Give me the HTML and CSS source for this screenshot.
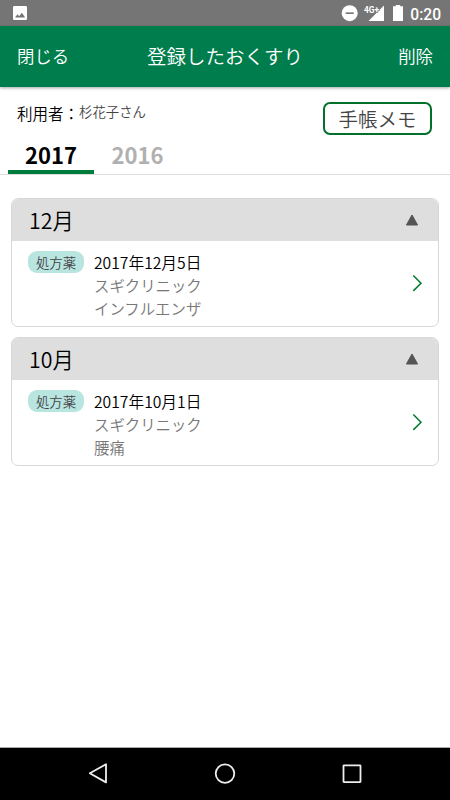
FILE: index.html
```html
<!DOCTYPE html>
<html lang="ja">
  <head>
    <meta charset="UTF-8" />
    <meta name="viewport" content="width=device-width, initial-scale=1.0" />
    <title>登録したおくすり</title>
    <link rel="stylesheet" href="styles.css">
  </head>
  <body>
    <!-- ステータスバー -->
    <div class="status-bar">
      <svg width="14" height="14" viewBox="0 0 14 14">
        <rect width="14" height="14" rx="1.3" fill="#fff" />
        <path d="M2 11.5L4.5 8.3L6.2 10.2L8.8 6.8L12.2 11.5Z" fill="#757575" />
      </svg>
      <div class="status-right">
        <svg width="70" height="20" viewBox="0 0 70 20">
          <circle cx="9.7" cy="9.2" r="8" fill="#fff" />
          <path d="M5.7 9.2H13.7" stroke="#757575" stroke-width="1.6" />
          <path d="M44 1.5V17H28.5Z" fill="#fff" />
          <text class="status-net" x="24" y="8.6" textLength="15" lengthAdjust="spacingAndGlyphs">4G+</text>
          <path d="M53 2.2H55.8V1H60.2V2.2H63V17H53Z" fill="#fff" />
        </svg>
        <span class="status-time">0:20</span>
      </div>
    </div>

    <!-- ヘッダー -->
    <header class="header">
      <span class="header-btn">閉じる</span>
      <h1>登録したおくすり</h1>
      <span class="header-btn right">削除</span>
    </header>

    <!-- 利用者と年の切り替え -->
    <div class="user">
      <p class="user-label">利用者：<span class="user-name">杉花子さん</span></p>
      <button class="memo">手帳メモ</button>
    </div>
    <nav class="tabs">
      <span class="tab active">2017</span>
      <span class="tab">2016</span>
    </nav>

    <!-- 月ごとの一覧 -->
    <main>
      <section class="card">
        <h2>12月
          <svg width="14" height="12" viewBox="0 0 14 12"><path d="M7 1L12.6 11H1.4Z" fill="#555" stroke="#555" stroke-linejoin="round" /></svg>
        </h2>
        <div class="item">
          <span class="badge">処方薬</span>
          <div class="detail">
            <p class="date">2017年12月5日</p>
            <p>スギクリニック</p>
            <p>インフルエンザ</p>
          </div>
          <svg class="arrow" width="11" height="18" viewBox="0 0 11 18"><path d="M1.3 1.5L9 9.2L1.3 16.9" /></svg>
        </div>
      </section>
      <section class="card">
        <h2>10月
          <svg width="14" height="12" viewBox="0 0 14 12"><path d="M7 1L12.6 11H1.4Z" fill="#555" stroke="#555" stroke-linejoin="round" /></svg>
        </h2>
        <div class="item">
          <span class="badge">処方薬</span>
          <div class="detail">
            <p class="date">2017年10月1日</p>
            <p>スギクリニック</p>
            <p>腰痛</p>
          </div>
          <svg class="arrow" width="11" height="18" viewBox="0 0 11 18"><path d="M1.3 1.5L9 9.2L1.3 16.9" /></svg>
        </div>
      </section>
    </main>

    <!-- ナビゲーションバー -->
    <footer class="nav-bar">
      <svg width="22" height="22" viewBox="0 0 22 22"><path d="M19 1.3V19.4L2.8 10.3Z" /></svg>
      <svg width="22" height="22" viewBox="0 0 22 22"><circle cx="11" cy="10.6" r="9.3" /></svg>
      <svg width="22" height="22" viewBox="0 0 22 22"><rect x="2.5" y="2.3" width="17" height="16.8" rx="0.5" /></svg>
    </footer>
  </body>
</html>
```
FILE: styles.css
```css
* {
  margin: 0;
  padding: 0;
  box-sizing: border-box;
}
body {
  height: 800px;
  display: flex;
  flex-direction: column;
  overflow: hidden;
  background: #fff;
  color: #000;
  font-family: "Noto Sans CJK JP", sans-serif;
  font-weight: 350;
}

/* ===== ステータスバー ===== */
.status-bar {
  height: 26px;
  flex: none;
  display: flex;
  align-items: center;
  justify-content: space-between;
  padding: 0 9px 0 13px;
  background: #757575;
  color: #fff;
}
.status-right {
  display: flex;
  align-items: center;
}
.status-right svg {
  margin-top: 1px;
}
.status-net {
  font: 700 9.5px Roboto, sans-serif;
  fill: #fff;
  stroke: #757575;
  stroke-width: 1.5px;
  paint-order: stroke;
}
.status-time {
  font: 500 15.6px/20px Roboto, sans-serif;
  margin-top: 3px;
}

/* ===== ヘッダー ===== */
.header {
  height: 61px;
  flex: none;
  display: grid;
  grid-template-columns: 1fr auto 1fr;
  align-items: center;
  padding: 0 17px 2px;
  background: #007d4c;
  color: #fff;
  box-shadow: 0 1px 3px rgba(0, 0, 0, 0.35);
}
.header h1 {
  font-size: 19.5px;
  font-weight: inherit;
  line-height: 28px;
}
.header-btn {
  font-size: 17.4px;
  line-height: 26px;
}
.right {
  text-align: right;
}

/* ===== 利用者 ===== */
.user {
  height: 50px;
  flex: none;
  display: flex;
  justify-content: space-between;
  align-items: flex-start;
  padding: 14px 18px 0 17px;
}
.user-label {
  display: flex;
  font-size: 15.5px;
  line-height: 24px;
}
.user-name {
  font-size: 13.4px;
  line-height: 20px;
  color: #444;
}
.memo {
  width: 109px;
  height: 33px;
  margin-top: 1px;
  background: #fff;
  border: 2px solid #00702a;
  border-radius: 7px;
  color: #444;
  font-family: inherit;
  font-size: 19.5px;
  font-weight: inherit;
  line-height: 29px;
}

/* ===== 年タブ ===== */
.tabs {
  height: 38px;
  flex: none;
  display: flex;
  padding-left: 8px;
  border-bottom: 1px solid #ddd;
}
.tab {
  width: 87px;
  height: 37px;
  text-align: center;
  font-size: 22px;
  font-weight: 700;
  line-height: 34px;
  color: #b0b0b0;
}
.tab.active {
  width: 86px;
  color: #000;
  border-bottom: 4px solid #007d3c;
}

/* ===== 一覧 ===== */
main {
  flex: 1;
  padding: 23px 11px 0;
}
.card {
  height: 129px;
  margin-bottom: 10px;
  border: 1px solid #d8d8d8;
  border-radius: 7px;
  overflow: hidden;
}
.card h2 {
  height: 42px;
  display: flex;
  align-items: center;
  justify-content: space-between;
  padding: 0 19px 0 17px;
  background: #dedede;
  font-size: 21.3px;
  font-weight: inherit;
  line-height: 42px;
}
.item {
  display: flex;
  padding: 10px 15px 0 16px;
}
.badge {
  width: 56px;
  height: 22px;
  margin-right: 10px;
  border-radius: 9px;
  background: #b9e5e1;
  color: #444;
  font-size: 13.4px;
  line-height: 22px;
  text-align: center;
}
.detail {
  flex: 1;
  font-size: 15.4px;
  line-height: 23px;
  color: #777;
}
.date {
  font-size: 15.7px;
  color: #000;
}
.arrow {
  margin-top: 23px;
}
.arrow path {
  fill: none;
  stroke: #007a2e;
  stroke-width: 1.5;
}

/* ===== ナビゲーションバー ===== */
.nav-bar {
  height: 53px;
  flex: none;
  display: flex;
  justify-content: space-between;
  align-items: center;
  padding: 0 87px;
  background: #000;
  border-top: 1px solid #aaa;
}
.nav-bar path,
.nav-bar circle,
.nav-bar rect {
  fill: none;
  stroke: #eee;
  stroke-width: 1.8;
  stroke-linejoin: round;
}
```
